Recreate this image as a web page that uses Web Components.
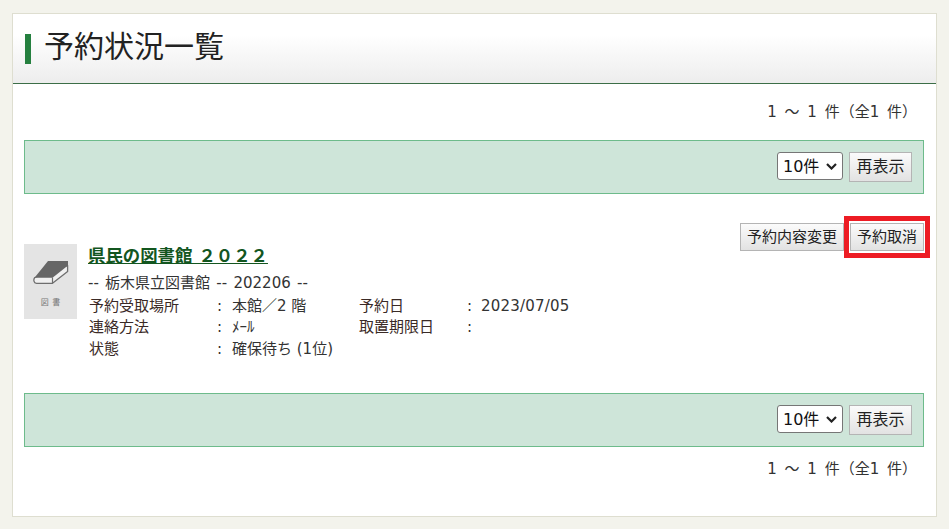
<!DOCTYPE html>
<html lang="ja">
<head>
<meta charset="utf-8">
<title>予約状況一覧</title>
<style>
	html, body { margin: 0; height: 100%; }
	body {
		background: #f3f3ec;
		color: #333;
		font: 15px/21.5px "DejaVu Sans", "Noto Sans CJK JP", sans-serif;
		overflow: hidden;
	}
</style>
</head>
<body>
<template id="panel-tpl">
	<style>
		:host {
			display: block;
			box-sizing: border-box;
			margin: 13px 12px 12px;
			height: 504px;
			background: #fff;
			border: 1px solid #deded0;
		}
		.content { padding: 0 12px 0 11px; }
	</style>
	<slot name="heading"></slot>
	<div class="content"><slot></slot></div>
</template>

<template id="heading-tpl">
	<style>
		:host {
			display: flex;
			align-items: center;
			box-sizing: border-box;
			height: 70px;
			padding: 1px 0 0 12px;
			background: linear-gradient(#fff 30%, #ededed);
			border-bottom: 1px solid #3c6e47;
		}
		.mark { width: 6px; height: 30px; background: #25803f; margin-right: 13px; }
		h1 { margin: 0; font-size: 30px; line-height: 30px; font-weight: normal; color: #222; position: relative; top: -2px; }
	</style>
	<span class="mark"></span>
	<h1><slot></slot></h1>
</template>

<template id="count-tpl">
	<style>
		:host { display: block; text-align: right; padding-right: 7px; line-height: 21px; text-spacing-trim: space-all; word-spacing: 3px; }
	</style>
	<slot></slot>
</template>

<template id="button-tpl">
	<style>
		:host { display: inline-block; }
		button {
			display: block;
			box-sizing: border-box;
			height: var(--btn-height, 28px);
			padding: 0 var(--btn-pad, 6px);
			font: inherit;
			font-size: var(--btn-size, 15px);
			line-height: 1;
			color: #222;
			background: linear-gradient(#fbfbfb, #e2e2e2);
			border: 1px solid #b4b4b4;
			white-space: nowrap;
		}
	</style>
	<button type="button"><slot></slot></button>
</template>

<template id="bar-tpl">
	<style>
		:host {
			display: flex;
			justify-content: flex-end;
			align-items: flex-start;
			gap: 6px;
			box-sizing: border-box;
			height: 54px;
			padding: 11px 11px 0;
			background: #cee5d9;
			border: 1px solid #6dbb8b;
		}
		.select { position: relative; display: block; height: 28px; }
		select {
			display: block;
			box-sizing: border-box;
			width: 66px;
			height: 28px;
			padding: 0 0 0 5px;
			font: 16px "DejaVu Sans", "Noto Sans CJK JP", sans-serif;
			color: #111;
			background: #fff;
			border: 1px solid #767676;
			border-radius: 3px;
			appearance: none;
		}
		.select svg { position: absolute; right: 6px; top: 11px; pointer-events: none; }
		ui-button { --btn-height: 30px; --btn-size: 16px; --btn-pad: 6.5px; }
	</style>
	<span class="select">
		<select><option>10件</option></select>
		<svg width="11" height="7" viewBox="0 0 11 7"><path d="M1 1 L5.5 5.5 L10 1" fill="none" stroke="#222" stroke-width="2.2"/></svg>
	</span>
	<ui-button>再表示</ui-button>
</template>

<template id="item-tpl">
	<style>
		:host {
			display: grid;
			grid-template-columns: 53px 1fr;
			grid-template-rows: 21px auto;
			column-gap: 11px;
		}
		.actions {
			grid-column: 2;
			grid-row: 1 / span 2;
			justify-self: end;
			display: flex;
			gap: 6px;
			align-items: flex-start;
		}
		.thumb { grid-column: 1; grid-row: 2; }
		.body { grid-column: 2; grid-row: 2; padding-top: 1px; }
		.title {
			display: inline-block;
			font-size: 17.4px;
			line-height: 22px;
			font-weight: bold;
			color: #13561f;
			text-decoration: underline;
		}
		.sub { margin-top: 3px; line-height: 22px; word-spacing: 1.5px; }
		.rows {
			display: grid;
			grid-template-columns: 128px 15px 127px 108px 14px auto;
			justify-content: start;
			margin: 2px 0 0 1px;
		}
		.label { color: #3a2a26; }
		.date { letter-spacing: .2px; }
		.highlight { position: relative; display: block; }
		.highlight::after {
			content: "";
			position: absolute;
			inset: -7px -6px;
			border: 5px solid #ed1c24;
			pointer-events: none;
		}
	</style>
	<div class="actions">
		<ui-button>予約内容変更</ui-button>
		<span class="highlight"><ui-button>予約取消</ui-button></span>
	</div>
	<book-thumb class="thumb"></book-thumb>
	<div class="body">
		<a class="title"><slot name="title"></slot></a>
		<div class="sub"><slot name="sub"></slot></div>
		<div class="rows">
			<span class="label">予約受取場所</span><span>:</span><span>本館／2 階</span>
			<span class="label">予約日</span><span>:</span><span class="date">2023/07/05</span>
			<span class="label">連絡方法</span><span>:</span><span>ﾒｰﾙ</span>
			<span class="label">取置期限日</span><span>:</span><span></span>
			<span class="label">状態</span><span>:</span><span style="grid-column: span 4">確保待ち (1位)</span>
		</div>
	</div>
</template>

<template id="thumb-tpl">
	<style>
		:host {
			display: flex;
			flex-direction: column;
			align-items: center;
			height: 75px;
			background: #e4e4e4;
		}
		svg { display: block; margin-top: 17px; }
		span { font-size: 8px; line-height: 10px; margin-top: 14px; color: #777; letter-spacing: 3.5px; margin-right: -3.5px; }
	</style>
	<svg width="36" height="23" viewBox="0 0 36 23">
		<path d="M1.8 16.5 C.2 18.5 .6 22.3 3.5 22.3 L19.5 22.3 L34.6 10.5 L34.6 4.5 Z" fill="#f0f0f0" stroke="#6e6e6e" stroke-width="1.3" stroke-linejoin="round"/>
		<path d="M15 0 L35 0 L35 4.5 L19.5 16.8 L1.5 16.8 Z" fill="#666"/>
		<path d="M19.5 16.5 L19.5 22.3" stroke="#6e6e6e" stroke-width="1.2"/>
	</svg>
	<span>図書</span>
</template>

<app-panel>
	<page-heading slot="heading">予約状況一覧</page-heading>
	<result-count style="margin-top: 18px">1 ～ 1 件（全1 件）</result-count>
	<page-bar style="margin-top: 17px"></page-bar>
	<reserve-item style="margin-top: 29px">
		<span slot="title">県民の図書館 ２０２２</span>
		<span slot="sub">-- 栃木県立図書館 -- 202206 --</span>
	</reserve-item>
	<page-bar style="margin-top: 33px"></page-bar>
	<result-count style="margin-top: 12px">1 ～ 1 件（全1 件）</result-count>
</app-panel>

<script>
	// each element just stamps its template into an open shadow root
	function define(tag, tplId) {
		customElements.define(tag, class extends HTMLElement {
			constructor() {
				super();
				const shadowRoot = this.attachShadow({mode: 'open'});
				shadowRoot.append(document.getElementById(tplId).content.cloneNode(true));
			}
		});
	}
	define('ui-button', 'button-tpl');
	define('book-thumb', 'thumb-tpl');
	define('app-panel', 'panel-tpl');
	define('page-heading', 'heading-tpl');
	define('result-count', 'count-tpl');
	define('page-bar', 'bar-tpl');
	define('reserve-item', 'item-tpl');
</script>
</body>
</html>
